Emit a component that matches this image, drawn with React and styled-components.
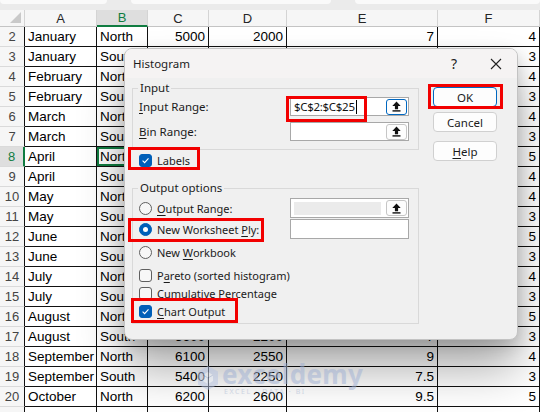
import React from 'react'
import styled, { createGlobalStyle, css } from 'styled-components'

const GlobalStyle = createGlobalStyle`
  html, body {
    margin: 0;
    padding: 0;
    background: #fff;
  }
  body {
    width: 540px;
    height: 412px;
    overflow: hidden;
    font-family: 'Liberation Sans', Arial, sans-serif;
  }
`

const GREEN = '#107c41'
const BLUE = '#005fb8'
const RED = '#f20000'
const UI_FONT = `'Noto Sans', 'Open Sans', sans-serif`

// sheet data: row, A, B, C, D, E, F
const rows = [
  [2, 'January', 'North', '5000', '2000', '7', '4'],
  [3, 'January', 'South', '4500', '1800', '6', '3'],
  [4, 'February', 'North', '5200', '2100', '7', '4'],
  [5, 'February', 'South', '4700', '1900', '6.5', '3'],
  [6, 'March', 'North', '5500', '2200', '8', '4'],
  [7, 'March', 'South', '4900', '2000', '7', '3'],
  [8, 'April', 'North', '5800', '2400', '8.5', '5'],
  [9, 'April', 'South', '5100', '2100', '7', '4'],
  [10, 'May', 'North', '6000', '2500', '9', '4'],
  [11, 'May', 'South', '5300', '2200', '7.5', '3'],
  [12, 'June', 'North', '6300', '2700', '9.5', '5'],
  [13, 'June', 'South', '5600', '2300', '8', '3'],
  [14, 'July', 'North', '6500', '2800', '10', '4'],
  [15, 'July', 'South', '5800', '2400', '8', '3'],
  [16, 'August', 'North', '6400', '2750', '9.5', '5'],
  [17, 'August', 'South', '5600', '2200', '7', '3'],
  [18, 'September', 'North', '6100', '2550', '9', '4'],
  [19, 'September', 'South', '5400', '2250', '7.5', '3'],
  [20, 'October', 'North', '6200', '2600', '9.5', '5'],
  [21, '', '', '', '', '', '']
]

const columns = ['A', 'B', 'C', 'D', 'E', 'F']
const numeric = [false, false, true, true, true, true]

// ---------- sheet ----------
const Page = styled.div`
  position: relative;
  width: 540px;
  height: 412px;
  overflow: hidden;
  background: #fff;
`

const TopStrip = styled.div`
  height: 10px;
  background: #ebebeb;
  display: flex;
  gap: 24px;
`

const StripTab = styled.div`
  width: ${p => p.w}px;
  height: 4px;
  background: #fafafa;
  border-radius: 0 0 5px 5px;
`

const Grid = styled.div`
  display: grid;
  grid-template-columns: 25px 72px 51px 61px 78px 151px 102px;
  grid-template-rows: 17px;
  grid-auto-rows: 20px;
`

const Corner = styled.div`
  position: relative;
  background: #f6f6f6;
  border-right: 1px solid #d4d4d4;
  border-bottom: 1px solid #c4c4c4;
  &::after {
    content: '';
    position: absolute;
    right: 3px;
    bottom: 3px;
    border-left: 11px solid transparent;
    border-bottom: 11px solid #c9c9c9;
  }
`

const ColHead = styled.div`
  display: flex;
  align-items: center;
  justify-content: center;
  font-size: 13px;
  color: #262626;
  background: #f6f6f6;
  border-right: 1px solid #d4d4d4;
  border-bottom: 1px solid #c4c4c4;
  box-sizing: border-box;
  ${p =>
    p.selected &&
    css`
      background: #dedede;
      color: ${GREEN};
      border-bottom: 2px solid ${GREEN};
    `}
`

const RowHead = styled.div`
  display: flex;
  align-items: center;
  justify-content: center;
  font-size: 13px;
  color: #444;
  background: #f6f6f6;
  border-bottom: 1px solid #dadada;
  border-right: 1px solid #111;
  box-sizing: border-box;
  ${p =>
    p.selected &&
    css`
      background: #dedede;
      color: ${GREEN};
      border-right: 2px solid ${GREEN};
    `}
`

const Cell = styled.div`
  display: flex;
  align-items: center;
  justify-content: ${p => (p.numeric ? 'flex-end' : 'flex-start')};
  padding: 0 3px;
  font-size: 13.5px;
  color: #000;
  white-space: nowrap;
  overflow: hidden;
  border-right: 1px solid #111;
  border-bottom: 1px solid #111;
  box-sizing: border-box;
  ${p =>
    p.active &&
    css`
      box-shadow: inset 0 0 0 2px ${GREEN};
    `}
`

// ---------- dialog ----------
const Dialog = styled.div`
  position: absolute;
  left: 124px;
  top: 48px;
  width: 394px;
  height: 292px;
  box-sizing: border-box;
  background: #f0f0f0;
  border: 1px solid #c3c3c3;
  border-radius: 8px;
  box-shadow: 0 30px 46px rgba(0, 0, 0, 0.32), 0 6px 16px rgba(0, 0, 0, 0.16);
  font-family: ${UI_FONT};
  font-size: 11px;
  color: #1b1b1b;
  overflow: hidden;
`

const TitleBar = styled.div`
  height: 29px;
  display: flex;
  align-items: center;
  justify-content: space-between;
  padding: 0 0 0 8px;
  background: #f5f3f3;
`

const Title = styled.span`
  font-size: 11.5px;
  margin-top: -1px;
`

const TitleTools = styled.div`
  display: flex;
  align-items: center;
  height: 100%;
`

const ToolButton = styled.div`
  width: 42px;
  height: 100%;
  display: flex;
  align-items: center;
  justify-content: center;
  font-size: 14px;
  color: #222;
`

const Body = styled.div`
  display: flex;
  gap: 14px;
  padding: 3px 20px 0 7px;
`

const MainCol = styled.div`
  width: 287px;
  display: flex;
  flex-direction: column;
`

const Group = styled.fieldset`
  margin: ${p => p.mt || 0}px 0 0;
  padding: 2px 9px ${p => p.pb}px 6px;
  border: 1px solid #d9d9d9;
  min-width: 0;
  display: flex;
  flex-direction: column;
  gap: ${p => p.gap || 0}px;
`

const Legend = styled.legend`
  padding: 0 2px;
  margin-left: -1px;
  line-height: 14px;
  font-size: 11.5px;
`

const FieldRow = styled.div`
  display: flex;
  align-items: center;
  height: ${p => p.h || 19}px;
  margin-top: ${p => p.mt || 0}px;
`

const FieldLabel = styled.span`
  width: 151px;
  flex-shrink: 0;
  font-size: 11.5px;
`

const Key = styled.span`
  text-decoration: underline;
  text-underline-offset: 2px;
`

const InputBox = styled.div`
  width: 119px;
  height: ${p => p.h || 19}px;
  box-sizing: border-box;
  border: 1px solid #a8a8a8;
  background: #fff;
  display: flex;
  align-items: center;
  padding: 0 1px 0 3px;
  margin-left: auto;
`

const InputText = styled.span`
  flex: 1;
  display: flex;
  align-items: center;
  font-size: 11.5px;
  color: #111;
  letter-spacing: -0.3px;
`

const Caret = styled.span`
  width: 1px;
  height: 14px;
  background: #000;
  margin-left: 1px;
`

const DisabledFill = styled.span`
  flex: 1;
  height: 13px;
  margin-right: 5px;
  background: #ebebeb;
`

const RefButton = styled.div`
  width: 21px;
  height: 16px;
  box-sizing: border-box;
  display: flex;
  align-items: center;
  justify-content: center;
  border: 1px solid ${p => (p.focused ? '#0067c0' : '#c6c6c6')};
  border-radius: 3px;
  background: #fdfdfd;
`

const OptionRow = styled.label`
  display: flex;
  align-items: center;
  gap: 5px;
  height: ${p => p.h || 18}px;
  margin-top: ${p => p.mt || 0}px;
  padding-left: ${p => p.pl || 0}px;
  white-space: nowrap;
`

const Box = styled.span`
  width: 13px;
  height: 13px;
  box-sizing: border-box;
  flex-shrink: 0;
  border-radius: 3px;
  display: flex;
  align-items: center;
  justify-content: center;
  border: 1px solid ${p => (p.checked ? BLUE : '#5f5f5f')};
  background: ${p => (p.checked ? BLUE : '#f7f7f7')};
`

const Radio = styled.span`
  width: 13px;
  height: 13px;
  box-sizing: border-box;
  flex-shrink: 0;
  border-radius: 50%;
  display: flex;
  align-items: center;
  justify-content: center;
  border: 1px solid ${p => (p.checked ? BLUE : '#5f5f5f')};
  background: ${p => (p.checked ? BLUE : '#f7f7f7')};
  &::after {
    content: '';
    display: ${p => (p.checked ? 'block' : 'none')};
    width: 5px;
    height: 5px;
    border-radius: 50%;
    background: #fff;
  }
`

const ButtonCol = styled.div`
  width: 65px;
  display: flex;
  flex-direction: column;
  padding-top: 6px;
`

const Button = styled.div`
  height: 20px;
  box-sizing: border-box;
  margin-top: ${p => p.mt || 0}px;
  display: flex;
  align-items: center;
  justify-content: center;
  background: #fdfdfd;
  border: 1px solid ${p => (p.primary ? '#0067c0' : '#d0d0d0')};
  border-radius: 4px;
  font-size: 11.5px;
`

const Highlight = styled.div`
  position: absolute;
  left: ${p => p.x}px;
  top: ${p => p.y}px;
  width: ${p => p.w}px;
  height: ${p => p.h}px;
  box-sizing: border-box;
  border: 3px solid ${RED};
  pointer-events: none;
`

// ---------- watermark ----------
const Watermark = styled.div`
  position: absolute;
  left: 197px;
  top: 361px;
  display: flex;
  align-items: center;
  gap: 3px;
  opacity: 0.5;
  pointer-events: none;
`

const MarkText = styled.div`
  display: flex;
  flex-direction: column;
  line-height: 1;
`

const MarkName = styled.span`
  font-family: 'Noto Sans', sans-serif;
  font-weight: 700;
  font-size: 26px;
  color: #9fb0d4;
  letter-spacing: 0.3px;
`

const MarkTag = styled.span`
  font-family: 'Noto Sans', sans-serif;
  font-size: 7px;
  letter-spacing: 1.6px;
  color: #a9b6d2;
  margin-left: 2px;
  margin-top: 1px;
`

const UpArrow = () => (
  <svg width="11" height="11" viewBox="0 0 11 11">
    <path d="M5.5 0.5 L1.3 5 H3.9 V8.2 H7.1 V5 H9.7 Z" fill="#111" />
    <rect x="1.5" y="9.2" width="8" height="1.4" fill="#111" />
  </svg>
)

const CheckMark = () => (
  <svg width="9" height="9" viewBox="0 0 9 9">
    <path d="M1.6 4.7 L3.6 6.6 L7.5 2.4" fill="none" stroke="#fff" strokeWidth="1.1" />
  </svg>
)

const CloseIcon = () => (
  <svg width="12" height="12" viewBox="0 0 12 12">
    <path d="M1 1 L11 11 M11 1 L1 11" stroke="#222" strokeWidth="1.1" />
  </svg>
)

const CubeLogo = () => (
  <svg width="22" height="26" viewBox="0 0 22 26">
    <path d="M11 1 L21 6.5 V19.5 L11 25 L1 19.5 V6.5 Z" fill="#b5c3e2" />
    <path d="M11 7 L16 10 V16 L11 19 L6 16 V10 Z" fill="#e6ecf7" />
    <path d="M11 13 L16 10 M11 13 V19 M11 13 L6 10" stroke="#9fb0d4" strokeWidth="1" />
  </svg>
)

const CheckOption = ({ checked, children, h, mt, pl }) => (
  <OptionRow h={h} mt={mt} pl={pl}>
    <Box checked={checked}>{checked && <CheckMark />}</Box>
    <span>{children}</span>
  </OptionRow>
)

const HistogramDialog = () => (
  <Dialog>
    <TitleBar>
      <Title>Histogram</Title>
      <TitleTools>
        <ToolButton>?</ToolButton>
        <ToolButton>
          <CloseIcon />
        </ToolButton>
      </TitleTools>
    </TitleBar>

    <Body>
      <MainCol>
        <Group pb={8} gap={6}>
          <Legend>Input</Legend>
          <FieldRow>
            <FieldLabel>
              <Key>I</Key>nput Range:
            </FieldLabel>
            <InputBox>
              <InputText>
                $C$2:$C$25
                <Caret />
              </InputText>
              <RefButton focused>
                <UpArrow />
              </RefButton>
            </InputBox>
          </FieldRow>
          <FieldRow>
            <FieldLabel>
              <Key>B</Key>in Range:
            </FieldLabel>
            <InputBox>
              <InputText />
              <RefButton>
                <UpArrow />
              </RefButton>
            </InputBox>
          </FieldRow>
        </Group>

        <CheckOption checked h={16} mt={2} pl={7}>
          <Key>L</Key>abels
        </CheckOption>

        <Group mt={13} pb={3}>
          <Legend>Output options</Legend>
          <FieldRow h={20} mt={1}>
            <OptionRow h={20}>
              <Radio />
              <span>
                <Key>O</Key>utput Range:
              </span>
            </OptionRow>
            <InputBox h={20}>
              <DisabledFill />
              <RefButton>
                <UpArrow />
              </RefButton>
            </InputBox>
          </FieldRow>
          <FieldRow h={20} mt={1}>
            <OptionRow h={20}>
              <Radio checked />
              <span>
                New Worksheet <Key>P</Key>ly:
              </span>
            </OptionRow>
            <InputBox h={20} />
          </FieldRow>
          <OptionRow h={18} mt={4}>
            <Radio />
            <span>
              New <Key>W</Key>orkbook
            </span>
          </OptionRow>
          <CheckOption mt={5}>
            P<Key>a</Key>reto (sorted histogram)
          </CheckOption>
          <CheckOption>
            Cu<Key>m</Key>ulative Percentage
          </CheckOption>
          <CheckOption checked>
            <Key>C</Key>hart Output
          </CheckOption>
        </Group>
      </MainCol>

      <ButtonCol>
        <Button primary>OK</Button>
        <Button mt={5}>Cancel</Button>
        <Button mt={9}>
          <Key>H</Key>elp
        </Button>
      </ButtonCol>
    </Body>

    <Highlight x={161} y={47} w={81} h={26} />
    <Highlight x={303} y={35} w={75} h={25} />
    <Highlight x={3} y={98} w={72} h={23} />
    <Highlight x={3} y={169} w={136} h={24} />
    <Highlight x={6} y={249} w={107} h={25} />
  </Dialog>
)

const App = () => (
  <Page>
    <GlobalStyle />
    <TopStrip>
      <StripTab w={107} />
      <StripTab w={200} />
      <StripTab w={185} />
    </TopStrip>

    <Grid>
      <Corner />
      {columns.map(col => (
        <ColHead key={col} selected={col === 'B'}>
          {col}
        </ColHead>
      ))}
      {rows.map(([num, ...cells]) => (
        <React.Fragment key={num}>
          <RowHead selected={num === 8}>{num}</RowHead>
          {cells.map((value, i) => (
            <Cell
              key={i}
              numeric={numeric[i]}
              active={num === 8 && i === 1}
            >
              {value}
            </Cell>
          ))}
        </React.Fragment>
      ))}
    </Grid>

    <HistogramDialog />

    <Watermark>
      <CubeLogo />
      <MarkText>
        <MarkName>exceldemy</MarkName>
        <MarkTag>EXCEL · DATA · BI</MarkTag>
      </MarkText>
    </Watermark>
  </Page>
)

export default App
